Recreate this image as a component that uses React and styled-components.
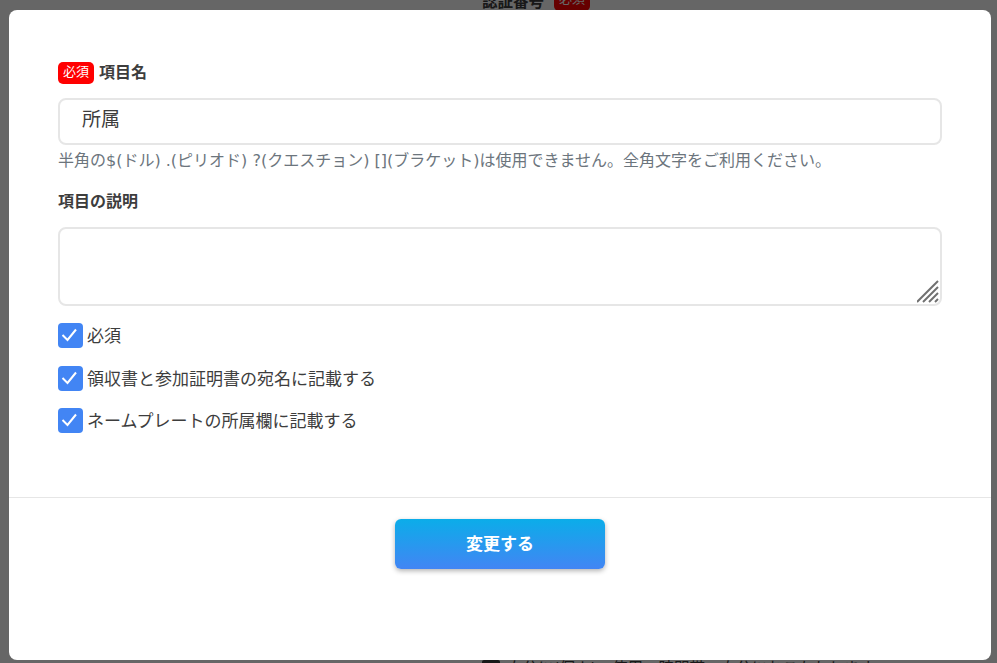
import React from "react";
import styled, { createGlobalStyle } from "styled-components";

const Global = createGlobalStyle`
  html, body { margin: 0; padding: 0; height: 100%; overflow: hidden; background: #fff; }
  * { box-sizing: border-box; }
  body { font-family: "DejaVu Sans", "Noto Sans CJK JP", sans-serif; color: #3c3c3c; }
`;

const Page = styled.div`
  position: relative;
  width: 997px;
  height: 663px;
  overflow: hidden;
`;

const BehindTop = styled.div`
  position: absolute;
  left: 482px;
  top: -11px;
  display: flex;
  align-items: center;
  gap: 10px;
  font-size: 15.5px;
  font-weight: 700;
`;

const BehindBottom = styled.div`
  position: absolute;
  left: 482px;
  top: 660px;
  display: flex;
  gap: 7px;
  font-size: 15.5px;
  line-height: 18px;
  white-space: nowrap;
`;

const BehindBox = styled.span`
  width: 18px;
  height: 18px;
  background: #3c3c3c;
  border-radius: 2px;
`;

const Backdrop = styled.div`
  position: absolute;
  inset: 0;
  background: rgba(0, 0, 0, 0.6);
  display: flex;
  padding: 10px 6px 3px 9px;
`;

const Modal = styled.div`
  flex: 1;
  background: #fff;
  border-radius: 8px;
  display: flex;
  flex-direction: column;
`;

const Body = styled.div`
  padding: 52px 49px 0;
  height: 488px;
  border-bottom: 1px solid #e6e6e6;
`;

const LabelRow = styled.div`
  display: flex;
  align-items: flex-start;
  gap: 5px;
  height: 22px;
  line-height: 21px;
  font-size: 16px;
  font-weight: 700;
  color: #3d3d3d;
`;

const Badge = styled.span`
  display: inline-flex;
  align-items: center;
  justify-content: center;
  width: 36px;
  height: 22px;
  padding-bottom: 2px;
  border-radius: 5px;
  background: #ff0000;
  color: #fff;
  font-size: 13px;
  line-height: 18px;
  font-weight: 400;
`;

const TextInput = styled.input`
  display: block;
  width: 100%;
  height: 47px;
  margin-top: 14px;
  padding: 0 22px 9px;
  border: 2px solid #e6e6e6;
  border-radius: 8px;
  outline: none;
  background: #fff;
  font: 400 19px "DejaVu Sans", "Noto Sans CJK JP", sans-serif;
  color: #3c3c3c;
`;

const Hint = styled.p`
  margin: 4px 0 0;
  height: 24px;
  line-height: 24px;
  font-size: 16px;
  color: #6c757d;
  white-space: nowrap;
`;

const DescLabel = styled(LabelRow)`
  margin-top: 18px;
  height: 19px;
`;

const AreaWrap = styled.div`
  position: relative;
  margin-top: 17px;
  height: 79px;
`;

const Area = styled.textarea`
  display: block;
  width: 100%;
  height: 100%;
  padding: 8px 22px;
  border: 2px solid #e6e6e6;
  border-radius: 8px;
  outline: none;
  resize: none;
  background: #fff;
`;

const Grip = styled.svg`
  position: absolute;
  right: 3px;
  bottom: 3px;
  width: 22px;
  height: 23px;
  pointer-events: none;
`;

const Checks = styled.div`
  margin-top: 17px;
  display: flex;
  flex-direction: column;
  gap: 17.5px;
`;

const CheckRow = styled.label`
  display: flex;
  align-items: flex-start;
  gap: 4px;
  height: 25px;
  line-height: 26px;
  font-size: 17px;
  color: #3d3d3d;
`;

const Box = styled.span`
  width: 25px;
  height: 25px;
  flex: none;
  border-radius: 4px;
  background: #4285f4;
  display: flex;
`;

const Footer = styled.div`
  display: flex;
  justify-content: center;
  padding-top: 21px;
`;

const Submit = styled.button`
  width: 210px;
  height: 50px;
  padding: 0 0 3px;
  border: none;
  border-radius: 6px;
  background: linear-gradient(180deg, #0bade9 0%, #4285f4 100%);
  box-shadow: 0 2px 5px rgba(0, 0, 0, 0.3);
  color: #fff;
  font: 700 17px "DejaVu Sans", "Noto Sans CJK JP", sans-serif;
`;

const Check = () => (
  <svg width="25" height="25" viewBox="0 0 25 25" fill="none">
    <path d="M4.5 12 L9.5 17 L18 6.5" stroke="#fff" strokeWidth="2" />
  </svg>
);

const options = ["必須", "領収書と参加証明書の宛名に記載する", "ネームプレートの所属欄に記載する"];

export default function App() {
  return (
    <Page>
      <Global />
      <BehindTop>認証番号<Badge>必須</Badge></BehindTop>
      <BehindBottom><BehindBox />自分に(個人)、使用、時間帯、自分におこなわれます</BehindBottom>
      <Backdrop>
        <Modal>
          <Body>
            <LabelRow><Badge>必須</Badge>項目名</LabelRow>
            <TextInput defaultValue="所属" />
            <Hint>半角の$(ドル) .(ピリオド) ?(クエスチョン) [](ブラケット)は使用できません。全角文字をご利用ください。</Hint>
            <DescLabel>項目の説明</DescLabel>
            <AreaWrap>
              <Area />
              <Grip viewBox="0 0 22 23" fill="none" stroke="#707070" strokeWidth="2">
                <path d="M0 22 L21 1" />
                <path d="M6 22 L21 7" />
                <path d="M12 22 L21 13" />
                <path d="M18 22 L21 19" />
              </Grip>
            </AreaWrap>
            <Checks>
              {options.map((o) => (
                <CheckRow key={o}><Box><Check /></Box>{o}</CheckRow>
              ))}
            </Checks>
          </Body>
          <Footer>
            <Submit>変更する</Submit>
          </Footer>
        </Modal>
      </Backdrop>
    </Page>
  );
}
